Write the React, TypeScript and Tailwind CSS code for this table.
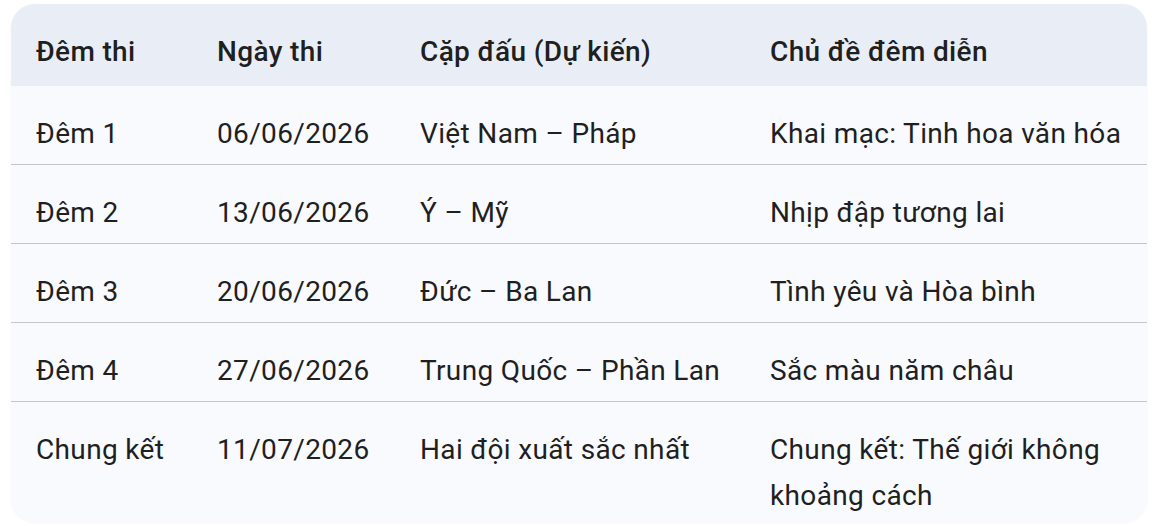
import React from "react";

const rows: [string, string, string, string][] = [
  ["Đêm 1", "06/06/2026", "Việt Nam – Pháp", "Khai mạc: Tinh hoa văn hóa"],
  ["Đêm 2", "13/06/2026", "Ý – Mỹ", "Nhịp đập tương lai"],
  ["Đêm 3", "20/06/2026", "Đức – Ba Lan", "Tình yêu và Hòa bình"],
  ["Đêm 4", "27/06/2026", "Trung Quốc – Phần Lan", "Sắc màu năm châu"],
  ["Chung kết", "11/07/2026", "Hai đội xuất sắc nhất", "Chung kết: Thế giới không khoảng cách"],
];

const headers = ["Đêm thi", "Ngày thi", "Cặp đấu (Dự kiến)", "Chủ đề đêm diễn"];

export default function App() {
  return (
    <div
      className="w-[1164px] h-[526px] bg-white pt-[4px] pl-[11px] overflow-hidden"
      style={{ fontFamily: "Roboto, 'Noto Sans', Arial, sans-serif" }}
    >
      <div className="w-[1136px] h-[518px] rounded-[24px] overflow-hidden bg-[#f8fafd] shadow-[0_1px_3px_rgba(0,0,0,0.04)]">
        <table className="table-fixed border-collapse w-full text-[28px] leading-[46px] tracking-[0.35px] text-[#1f1f1f]">
          <colgroup>
            <col className="w-[181px]" />
            <col className="w-[203px]" />
            <col className="w-[350px]" />
            <col className="w-[402px]" />
          </colgroup>
          <thead>
            <tr className="bg-[#e9eef6]">
              {headers.map((h) => (
                <th
                  key={h}
                  className="text-left font-medium align-top pl-[25px] pr-[20px] pt-[25px] pb-[11px]"
                >
                  {h}
                </th>
              ))}
            </tr>
          </thead>
          <tbody>
            {rows.map((r, i) => (
              <tr
                key={i}
                className={i < rows.length - 1 ? "border-b border-[#c4c7c5]" : ""}
              >
                {r.map((c, j) => (
                  <td
                    key={j}
                    className="align-top pl-[25px] pr-[20px] pt-[25px] pb-[7px]"
                  >
                    {c}
                  </td>
                ))}
              </tr>
            ))}
          </tbody>
        </table>
      </div>
    </div>
  );
}
